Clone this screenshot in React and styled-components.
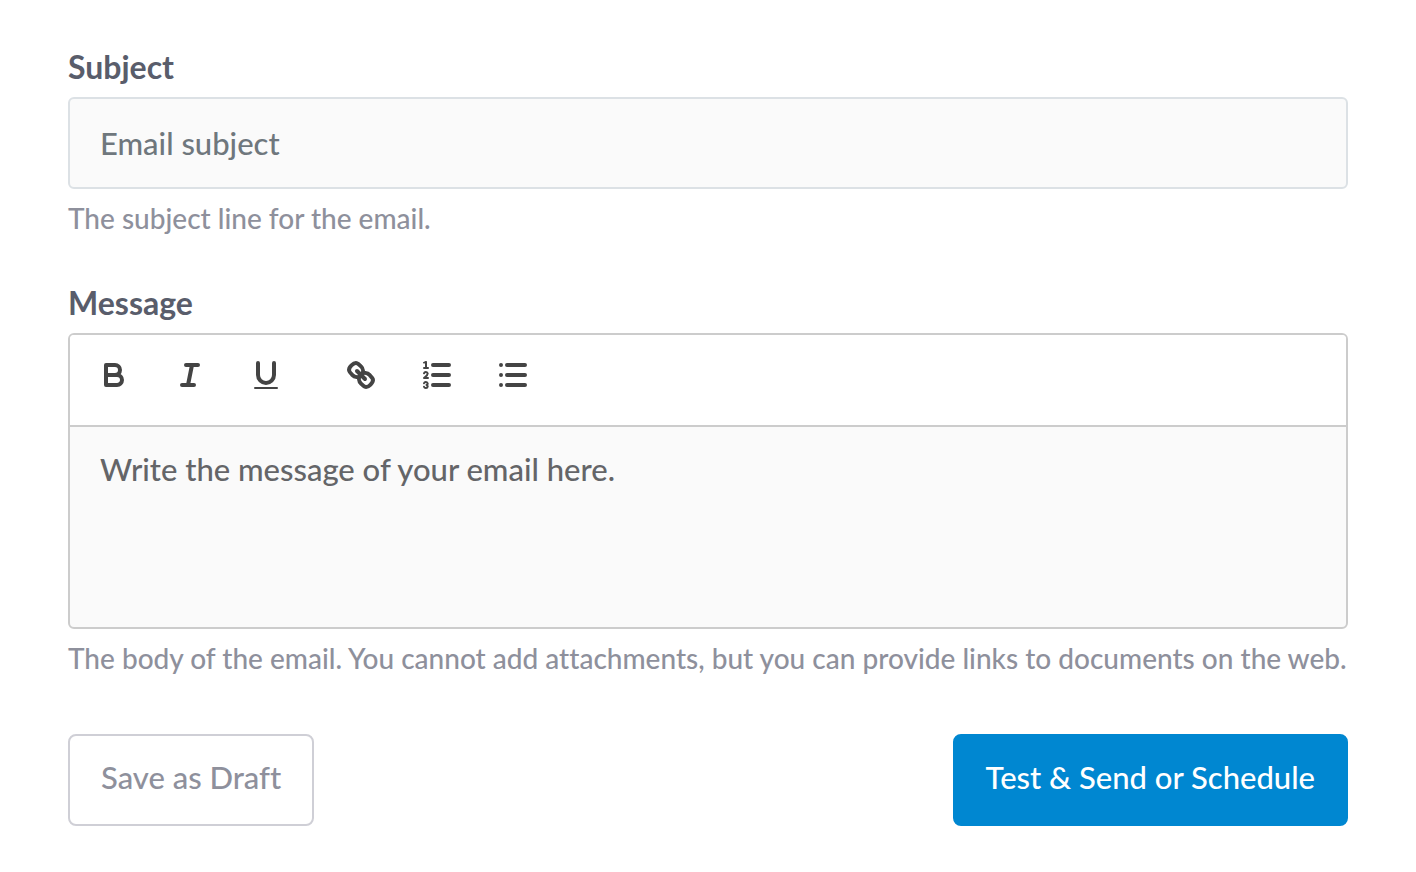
import React from "react";
import styled, { createGlobalStyle } from "styled-components";

const GlobalStyle = createGlobalStyle`
  *, *::before, *::after { box-sizing: border-box; }
  body {
    margin: 0;
    background: #fff;
    font-family: Lato, "Open Sans", sans-serif;
    font-weight: 500;
    font-size: 31px;
    line-height: 40px;
    font-variant-ligatures: no-common-ligatures;
  }
  button, input, textarea { font: inherit; font-variant-ligatures: inherit; margin: 0; }
`;

const Form = styled.form`
  display: flex;
  flex-direction: column;
  gap: 46px;
  padding: 47px 68px;
`;

const Field = styled.div`
  display: flex;
  flex-direction: column;
`;

const Label = styled.label`
  margin-bottom: 10px;
  color: #595d6b;
  font-size: 32px;
  font-weight: 700;
`;

const TextInput = styled.input`
  width: 100%;
  height: 92px;
  padding: 0 30px;
  border: 2px solid #dce1e5;
  border-radius: 6px;
  background: #fafafa;
  color: #6f777d;
  &::placeholder { color: #6f777d; opacity: 1; }
`;

const Help = styled.p`
  margin: 10px 0 0;
  color: #8e909c;
  font-size: 28px;
  line-height: 38px;
`;

const Editor = styled.div`
  border: 2px solid #ccc;
  border-radius: 6px;
  background: #fafafa;
  overflow: hidden;
`;

const Toolbar = styled.div`
  display: flex;
  gap: 59px;
  height: 92px;
  padding: 22px 26px;
  border-bottom: 2px solid #ccc;
  background: #fff;
`;

const ToolGroup = styled.div`
  display: flex;
  gap: 40px;
`;

const ToolButton = styled.button`
  width: 36px;
  height: 36px;
  padding: 0;
  border: 0;
  background: none;
  color: #444;
  cursor: pointer;
`;

const Icon = styled.svg`
  display: block;
  width: 36px;
  height: 36px;
  fill: none;
  stroke: currentColor;
  stroke-width: 2;
  stroke-linecap: round;
  stroke-linejoin: round;
  .thin { stroke-width: 1; }
  .solid { fill: currentColor; stroke: none; }
`;

const MessageArea = styled.textarea`
  display: block;
  width: 100%;
  height: 200px;
  padding: 22px 30px;
  border: 0;
  resize: none;
  background: transparent;
  color: #646568;
  &::placeholder { color: #646568; opacity: 1; }
`;

const Actions = styled.div`
  display: flex;
  justify-content: space-between;
  margin-top: 11px;
`;

const Button = styled.button`
  height: 92px;
  padding: 0 31px 6px;
  border: 2px solid ${(p) => (p.$primary ? "#0087d1" : "#cfcfd6")};
  border-radius: 8px;
  background: ${(p) => (p.$primary ? "#0087d1" : "#fff")};
  color: ${(p) => (p.$primary ? "#fff" : "#8e909c")};
  cursor: pointer;
`;

const textTools = [
  {
    name: "Bold",
    art: (
      <>
        <path d="M5,4H9.5A2.5,2.5,0,0,1,12,6.5v0A2.5,2.5,0,0,1,9.5,9H5Z" />
        <path d="M5,9h5.5A2.5,2.5,0,0,1,13,11.5v0A2.5,2.5,0,0,1,10.5,14H5Z" />
      </>
    ),
  },
  { name: "Italic", art: <path d="M7,4h6M5,14h6M8,14L10,4" /> },
  {
    name: "Underline",
    art: (
      <>
        <path d="M5,3V9a4.012,4.012,0,0,0,4,4H9a4.012,4.012,0,0,0,4-4V3" />
        <rect className="solid" x="3" y="15" width="12" height="1" rx="0.5" />
      </>
    ),
  },
];

const blockTools = [
  {
    name: "Link",
    art: (
      <>
        <path d="M7,7L11,11" />
        <path d="M8.9,4.577a3.476,3.476,0,0,1,.36,4.679A3.476,3.476,0,0,1,4.577,8.9C3.185,7.5,2.035,6.4,4.217,4.217S7.5,3.185,8.9,4.577Z" />
        <path d="M13.423,9.1a3.476,3.476,0,0,0-4.679-.36,3.476,3.476,0,0,0,.36,4.679c1.392,1.392,2.5,2.542,4.679.36S14.815,10.5,13.423,9.1Z" />
      </>
    ),
  },
  {
    name: "Numbered list",
    art: (
      <>
        <path d="M7,4h8M7,9h8M7,14h8" />
        <path className="thin" d="M2.5,5.5h2" />
        <path
          className="solid"
          d="M3.5,6A0.5,0.5,0,0,1,3,5.5V3.085l-0.276.138A0.5,0.5,0,0,1,2.053,3c-0.124-.247-0.023-0.324.224-0.447l1-.5A0.5,0.5,0,0,1,4,2.5v3A0.5,0.5,0,0,1,3.5,6Z"
        />
        <path className="thin" d="M4.5,10.5h-2c0-.234,1.85-1.076,1.85-2.234A0.959,0.959,0,0,0,2.5,8.156" />
        <path
          className="thin"
          d="M2.5,14.846a0.959,0.959,0,0,0,1.85-.109A0.7,0.7,0,0,0,3.75,14a0.688,0.688,0,0,0,.6-0.736,0.959,0.959,0,0,0-1.85-.109"
        />
      </>
    ),
  },
  {
    name: "Bulleted list",
    art: <path d="M6,4h9M6,9h9M6,14h9M3,4h0M3,9h0M3,14h0" />,
  },
];

function Tools({ items }) {
  return (
    <ToolGroup>
      {items.map((tool) => (
        <ToolButton key={tool.name} type="button" aria-label={tool.name}>
          <Icon viewBox="0 0 18 18" aria-hidden="true">
            {tool.art}
          </Icon>
        </ToolButton>
      ))}
    </ToolGroup>
  );
}

export default function App() {
  return (
    <>
      <GlobalStyle />
      <Form onSubmit={(e) => e.preventDefault()}>
        <Field>
          <Label htmlFor="subject">Subject</Label>
          <TextInput id="subject" type="text" placeholder="Email subject" aria-describedby="subject-help" />
          <Help id="subject-help">The subject line for the email.</Help>
        </Field>
        <Field>
          <Label htmlFor="message">Message</Label>
          <Editor>
            <Toolbar role="toolbar" aria-label="Formatting">
              <Tools items={textTools} />
              <Tools items={blockTools} />
            </Toolbar>
            <MessageArea
              id="message"
              placeholder="Write the message of your email here."
              aria-describedby="message-help"
            />
          </Editor>
          <Help id="message-help">
            The body of the email. You cannot add attachments, but you can provide links to documents on the web.
          </Help>
        </Field>
        <Actions>
          <Button type="button">Save as Draft</Button>
          <Button type="submit" $primary>
            Test &amp; Send or Schedule
          </Button>
        </Actions>
      </Form>
    </>
  );
}
